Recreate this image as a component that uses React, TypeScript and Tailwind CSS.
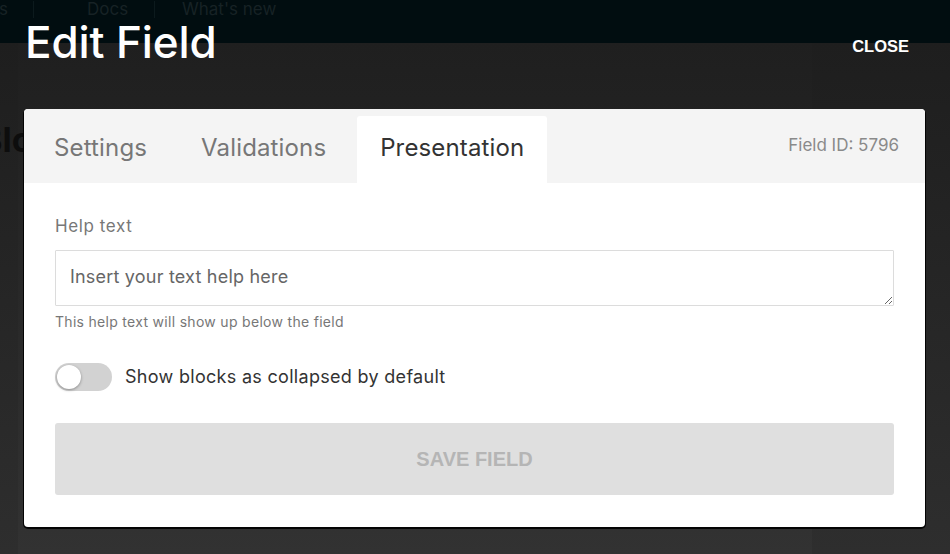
import React from "react";

export default function App() {
  return (
    <div className="relative h-[554px] w-[950px] overflow-hidden bg-[#2a2a2a] font-['Inter',sans-serif]">
      {/* background page (dimmed) */}
      <div className="flex h-full flex-col">
        <div className="flex h-[43px] items-start bg-[#010d10] pt-[1px] text-[17px] leading-[17px] text-[#172225]">
          <span className="-ml-[1px] w-[35px] border-r border-[#0c1a1d] pr-[26px]">s</span>
          <span className="w-[121px] border-r border-[#0c1a1d] pl-[53px]">Docs</span>
          <span className="pl-[27px]">What's new</span>
        </div>
        <div className="flex flex-1 bg-gradient-to-b from-[#1e1e1e] to-[#2e2e2e]">
          <div className="w-[18px]" />
          <div className="flex-1 bg-gradient-to-b from-[#1f1f1f] to-[#323232] pt-[80px]">
            <div className="-ml-[38px] text-[34px] font-bold leading-none text-[#0d0d0d]">Blocks</div>
          </div>
          <div className="w-[138px]" />
        </div>
      </div>

      {/* modal overlay */}
      <div className="absolute inset-0 flex flex-col px-[24px]">
        <div className="flex h-[109px] items-start justify-between">
          <h1 className="ml-[1px] mt-[18px] text-[44px] font-medium leading-[48px] tracking-[-0.1px] text-white">Edit Field</h1>
          <button className="mr-[17px] mt-[37px] font-['Liberation_Sans',sans-serif] text-[16.5px] font-bold leading-[18px] text-white">CLOSE</button>
        </div>
        <div className="w-[901px] overflow-hidden rounded-[4px] bg-white shadow-[0_1px_0_1px_rgba(0,0,0,0.9)]">
          <div className="flex h-[74px] items-end justify-between bg-[#f4f4f4] pl-[7px] pr-[26px]">
            <div className="flex h-[67px] gap-[7px] tracking-[0.15px]">
              <div className="flex items-center px-[23px] pb-[4px] text-[24px] text-[#777777]">Settings</div>
              <div className="ml-[1px] flex items-center px-[23px] pb-[4px] text-[24px] text-[#777777]">Validations</div>
              <div className="ml-[1px] flex w-[190px] items-center justify-center rounded-t-[3px] bg-white pb-[4px] text-[24px] text-[#333333]">Presentation</div>
            </div>
            <div className="self-center text-[17px] text-[#8a8a8a]">Field ID: 5796</div>
          </div>
          <div className="px-[31px] pb-[32px] pt-[33px]">
            <div className="text-[17px] leading-[20px] tracking-[0.6px] text-[#777777]">Help text</div>
            <textarea
              className="mt-[14px] block h-[56px] w-[839px] resize-y rounded-[1px] border border-[#dcdcdc] px-[14px] py-[14px] text-[18px] leading-[24px] tracking-[0.2px] text-[#333] outline-none placeholder:text-[#666666]"
              placeholder="Insert your text help here"
            />
            <div className="mt-[8px] text-[14px] leading-[16px] tracking-[0.3px] text-[#777777]">This help text will show up below the field</div>
            <div className="mt-[33px] flex items-center gap-[13px]">
              <div className="flex h-[28px] w-[57px] items-center rounded-full bg-[#d2d2d2] px-[2px]">
                <div className="h-[24px] w-[24px] rounded-full bg-white shadow-[0_1px_3px_rgba(0,0,0,0.35)]" />
              </div>
              <span className="text-[18px] leading-[24px] tracking-[0.3px] text-[#333333]">Show blocks as collapsed by default</span>
            </div>
            <button className="mt-[32px] flex h-[72px] w-[839px] items-center justify-center rounded-[3px] bg-[#dfdfdf] font-['Liberation_Sans',sans-serif] text-[20px] font-bold text-[#b5b5b5]">
              SAVE FIELD
            </button>
          </div>
        </div>
      </div>
    </div>
  );
}
